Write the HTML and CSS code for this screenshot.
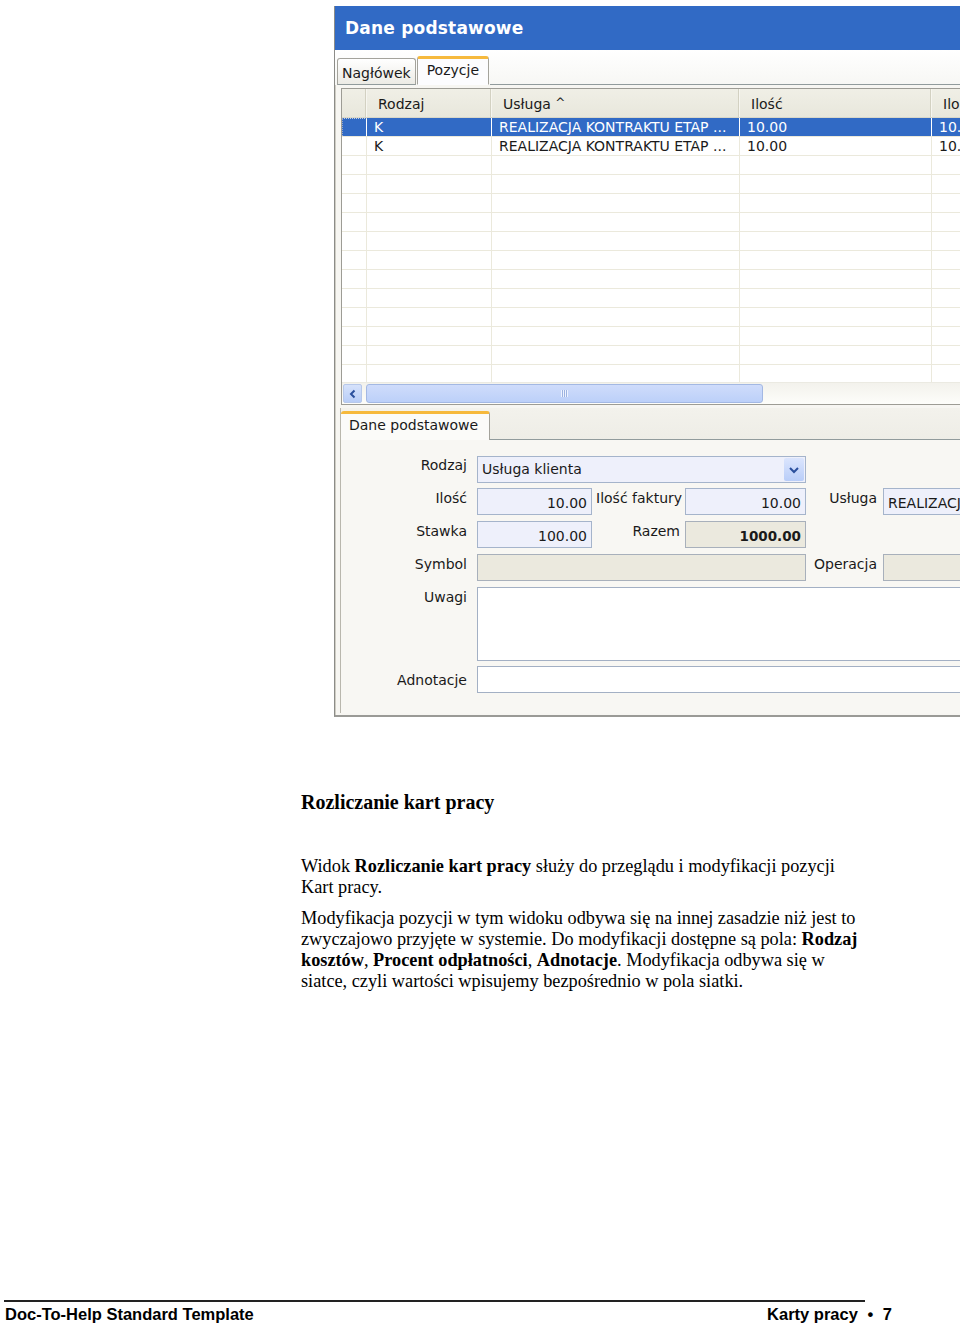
FILE: index.html
```html
<!DOCTYPE html>
<html lang="pl">
<head>
<meta charset="utf-8">
<title>Rozliczanie kart pracy</title>
<link rel="stylesheet" href="styles.css">
</head>
<body>
<div class="page">
  <div class="shot">
    <div class="window">
      <div class="titlebar">Dane podstawowe</div>
      <div class="tabstrip">
        <div class="tab">Nagłówek</div>
        <div class="tab active">Pozycje</div>
        <div class="tabfill"></div>
      </div>
      <div class="body">
        <div class="grid">
          <div class="grow ghead">
            <div class="c sel"></div>
            <div class="c">Rodzaj</div>
            <div class="c">Usługa <span class="sort">^</span></div>
            <div class="c">Ilość</div>
            <div class="c">Ilo</div>
          </div>
          <div class="rows">
            <div class="grow selected">
              <div class="c sel"></div>
              <div class="c">K</div>
              <div class="c">REALIZACJA KONTRAKTU ETAP ...</div>
              <div class="c">10.00</div>
              <div class="c">10.00</div>
            </div>
            <div class="grow">
              <div class="c sel"></div>
              <div class="c">K</div>
              <div class="c">REALIZACJA KONTRAKTU ETAP ...</div>
              <div class="c">10.00</div>
              <div class="c">10.00</div>
            </div>
            <div class="grow"><div class="c sel"></div><div class="c"></div><div class="c"></div><div class="c"></div><div class="c"></div></div>
            <div class="grow"><div class="c sel"></div><div class="c"></div><div class="c"></div><div class="c"></div><div class="c"></div></div>
            <div class="grow"><div class="c sel"></div><div class="c"></div><div class="c"></div><div class="c"></div><div class="c"></div></div>
            <div class="grow"><div class="c sel"></div><div class="c"></div><div class="c"></div><div class="c"></div><div class="c"></div></div>
            <div class="grow"><div class="c sel"></div><div class="c"></div><div class="c"></div><div class="c"></div><div class="c"></div></div>
            <div class="grow"><div class="c sel"></div><div class="c"></div><div class="c"></div><div class="c"></div><div class="c"></div></div>
            <div class="grow"><div class="c sel"></div><div class="c"></div><div class="c"></div><div class="c"></div><div class="c"></div></div>
            <div class="grow"><div class="c sel"></div><div class="c"></div><div class="c"></div><div class="c"></div><div class="c"></div></div>
            <div class="grow"><div class="c sel"></div><div class="c"></div><div class="c"></div><div class="c"></div><div class="c"></div></div>
            <div class="grow"><div class="c sel"></div><div class="c"></div><div class="c"></div><div class="c"></div><div class="c"></div></div>
            <div class="grow"><div class="c sel"></div><div class="c"></div><div class="c"></div><div class="c"></div><div class="c"></div></div>
            <div class="grow"><div class="c sel"></div><div class="c"></div><div class="c"></div><div class="c"></div><div class="c"></div></div>
          </div>
          <div class="hscroll">
            <div class="sbtn">
              <svg width="10" height="10" viewBox="0 0 10 10"><path d="M6.5 1.5 L3 5 L6.5 8.5" fill="none" stroke="#2a4f9c" stroke-width="2"/></svg>
            </div>
            <div class="thumb"><span class="grip"></span></div>
            <div class="track"></div>
          </div>
        </div>

        <div class="detail">
          <div class="tabstrip2">
            <div class="tab2">Dane podstawowe</div>
            <div class="tabfill2"></div>
          </div>
          <div class="form">
            <div class="frow first">
              <label class="lbl lbl-top">Rodzaj</label>
              <div class="inp combo w-wide">
                <span>Usługa klienta</span>
                <span class="ddbtn"><svg width="12" height="10" viewBox="0 0 12 10"><path d="M2 3 L6 7 L10 3" fill="none" stroke="#2a4f9c" stroke-width="2"/></svg></span>
              </div>
            </div>
            <div class="frow">
              <label class="lbl">Ilość</label>
              <div class="inp num w-small">10.00</div>
              <label class="lbl2 l-left">Ilość faktury</label>
              <div class="inp num w-mid">10.00</div>
              <label class="lbl3">Usługa</label>
              <div class="inp w-rest">REALIZACJA KONTRAKTU ETAP</div>
            </div>
            <div class="frow">
              <label class="lbl">Stawka</label>
              <div class="inp num w-small">100.00</div>
              <label class="lbl2">Razem</label>
              <div class="inp num ro bold w-mid">1000.00</div>
            </div>
            <div class="frow">
              <label class="lbl">Symbol</label>
              <div class="inp ro w-wide"></div>
              <label class="lbl3">Operacja</label>
              <div class="inp ro w-rest"></div>
            </div>
            <div class="frow">
              <label class="lbl">Uwagi</label>
              <div class="inp white area"></div>
            </div>
            <div class="frow last">
              <label class="lbl lbl-mid">Adnotacje</label>
              <div class="inp white full"></div>
            </div>
          </div>
        </div>
      </div>
    </div>
  </div>

  <div class="doc">
    <h2>Rozliczanie kart pracy</h2>
    <p>Widok <b>Rozliczanie kart pracy</b> służy do przeglądu i modyfikacji pozycji Kart pracy.</p>
    <p>Modyfikacja pozycji w tym widoku odbywa się na innej zasadzie niż jest to zwyczajowo przyjęte w systemie. Do modyfikacji dostępne są pola: <b>Rodzaj kosztów</b>, <b>Procent odpłatności</b>, <b>Adnotacje</b>. Modyfikacja odbywa się w siatce, czyli wartości wpisujemy bezpośrednio w pola siatki.</p>
  </div>

  <div class="footer">
    <div class="rule"></div>
    <div class="ftext">
      <span>Doc-To-Help Standard Template</span>
      <span>Karty pracy <span class="dot">•</span> 7</span>
    </div>
  </div>
</div>
</body>
</html>
```

FILE: styles.css
```css
html, body {
  margin: 0;
  padding: 0;
  background: #ffffff;
}
.page {
  width: 960px;
  height: 1325px;
  overflow: hidden;
  display: flex;
  flex-direction: column;
}
.shot {
  margin: 6px 0 0 334px;
  width: 626px;
  height: 711px;
  overflow: hidden;
  flex: none;
}
.window {
  width: 760px;
  height: 709px;
  border-left: 1px solid #8c8c88;
  border-bottom: 2px solid #9a9a96;
  font-family: "DejaVu Sans", sans-serif;
  font-size: 14px;
  color: #1a1a1a;
  background: #f4f3ee;
  display: flex;
  flex-direction: column;
}
.titlebar {
  height: 44px;
  background: #316ac5;
  color: #ffffff;
  font-weight: bold;
  font-size: 17px;
  line-height: 44px;
  padding-left: 10px;
  letter-spacing: 0.2px;
  flex: none;
}
.tabstrip {
  height: 35px;
  display: flex;
  align-items: flex-end;
  background: linear-gradient(#ffffff, #f7f7f4);
  padding-left: 2px;
  flex: none;
}
.tab {
  height: 25px;
  padding: 0 4px;
  line-height: 28px;
  border: 1px solid #a4a39c;
  border-bottom: 1px solid #919b9c;
  border-radius: 3px 3px 0 0;
  background: linear-gradient(#ffffff, #ecebe5);
  margin-right: 1px;
}
.tab.active {
  height: 29px;
  line-height: 22px;
  padding: 0 9px;
  border-top: 3px solid #f6b93c;
  border-bottom-color: #fcfcfe;
  background: #fcfcfe;
  box-sizing: border-box;
}
.tabfill {
  flex: 1;
  border-bottom: 1px solid #919b9c;
}
.body {
  flex: 1;
  padding: 3px 0 0 5px;
  background: #f7f6f2;
  border-left: 1px solid #cfcdc4;
}
.grid {
  border: 1px solid #9d9c95;
  border-right: none;
  background: #ffffff;
}
.grow {
  display: grid;
  grid-template-columns: 25px 125px 248px 192px 120px;
  height: 18px;
  border-bottom: 1px solid #ebe9dc;
}
.grow .c {
  border-right: 1px solid #ebe9dc;
  padding-left: 7px;
  line-height: 19px;
  white-space: nowrap;
  overflow: hidden;
}
.grow .c.sel {
  padding: 0;
  background: #ffffff;
}
.ghead {
  height: 28px;
  background: linear-gradient(#f0efe6, #e8e7dc);
  border-bottom: 1px solid #d9d7c9;
}
.ghead .c {
  line-height: 30px;
  padding-left: 11px;
  border-right: 1px solid #f7f6f0;
  box-shadow: inset -1px 0 0 #d3d1c2;
}
.ghead .c.sel {
  background: transparent;
}
.sort {
  font-size: 12px;
  position: relative;
  top: -2px;
}
.rows {
  height: 264px;
  overflow: hidden;
}
.grow.selected {
  background: #316ac5;
  color: #ffffff;
}
.grow.selected .c {
  border-right-color: #ffffff;
}
.grow.selected .c.sel {
  background: #316ac5;
  border-left: 1px dotted #9aa9c9;
  border-top: 1px dotted #c6cfdf;
}
.hscroll {
  height: 21px;
  display: flex;
  align-items: center;
  background: linear-gradient(#f3f2ec, #fdfdfa);
  border-top: 1px solid #ebeae2;
  padding-left: 1px;
}
.sbtn {
  width: 17px;
  height: 17px;
  border: 1px solid #b7c8ea;
  border-radius: 2px;
  background: linear-gradient(#d6e2fb, #b8cdf7);
  display: flex;
  align-items: center;
  justify-content: center;
}
.thumb {
  margin-left: 4px;
  width: 395px;
  height: 17px;
  border: 1px solid #a3b8e3;
  border-radius: 3px;
  background: linear-gradient(#cfdcfb, #bcd0f9);
  display: flex;
  align-items: center;
  justify-content: center;
}
.grip {
  width: 7px;
  height: 7px;
  background: repeating-linear-gradient(90deg, #eef3ff 0 1px, #9db3e0 1px 2px);
}
.track {
  flex: 1;
}
.detail {
  margin: 3px 0 0 -1px;
  border-left: 1px solid #b9b7ad;
}
.tabstrip2 {
  height: 32px;
  display: flex;
  align-items: flex-end;
  background: linear-gradient(#f3f2ec, #eeede6);
}
.tab2 {
  height: 29px;
  box-sizing: border-box;
  padding: 0 11px 0 8px;
  line-height: 22px;
  border-top: 3px solid #f6b93c;
  border-right: 1px solid #a4a39c;
  border-radius: 3px 3px 0 0;
  background: #fbfbf9;
}
.tabfill2 {
  flex: 1;
  border-bottom: 1px solid #919b9c;
}
.form {
  background: #f8f7f3;
  padding: 16px 0 20px 0;
  display: flex;
  flex-direction: column;
  gap: 6px;
}
.frow {
  display: flex;
  align-items: flex-start;
}
.frow.first {
  margin-bottom: -1px;
}
.frow.last {
  margin-top: -1px;
}
.lbl, .lbl2, .lbl3 {
  box-sizing: border-box;
  text-align: right;
  line-height: 20px;
  flex: none;
  white-space: nowrap;
}
.lbl {
  width: 136px;
  padding-right: 10px;
}
.lbl-top {
  line-height: 18px;
}
.lbl-mid {
  line-height: 26px;
  align-self: center;
}
.lbl2 {
  width: 93px;
  padding-right: 5px;
}
.lbl2.l-left {
  text-align: left;
  padding: 0 0 0 4px;
}
.lbl3 {
  width: 77px;
  padding-right: 6px;
}
.inp {
  box-sizing: border-box;
  height: 27px;
  border: 1px solid #a5b4cb;
  background: #eef0fb;
  padding: 0 4px;
  line-height: 29px;
  white-space: nowrap;
  overflow: hidden;
  flex: none;
}
.inp.num {
  text-align: right;
}
.inp.ro {
  background: #ebe9de;
  border-color: #a8b0bb;
}
.inp.bold {
  font-weight: bold;
  font-size: 13.5px;
}
.inp.white {
  background: #ffffff;
  border-color: #a3b0c4;
}
.w-small { width: 115px; }
.w-mid { width: 121px; }
.w-wide { width: 329px; }
.w-rest { width: 200px; }
.combo {
  display: flex;
  align-items: center;
  justify-content: space-between;
  padding-right: 1px;
  line-height: 27px;
}
.ddbtn {
  width: 20px;
  height: 23px;
  background: linear-gradient(#dbe5fd, #b9cdf8);
  border-radius: 2px;
  display: flex;
  align-items: center;
  justify-content: center;
}
.area {
  width: 500px;
  height: 74px;
}
.full {
  width: 500px;
  height: 27px;
}
.doc {
  margin: 74px 0 0 301px;
  width: 562px;
  font-family: "Liberation Serif", "Times New Roman", serif;
  font-size: 18.3px;
  line-height: 21px;
  color: #000;
}
.doc h2 {
  font-size: 20px;
  font-weight: bold;
  margin: 0 0 43px 0;
  line-height: 22px;
}
.doc p {
  margin: 0 0 10px 0;
}
.footer {
  margin: auto 0 0 4px;
  font-family: "Liberation Sans", Arial, sans-serif;
  font-weight: bold;
  font-size: 16.5px;
  line-height: 19px;
  color: #000;
}
.rule {
  width: 861px;
  height: 2px;
  background: #222;
}
.ftext {
  width: 887px;
  display: flex;
  justify-content: space-between;
  padding: 3px 0 1px 1px;
}
.dot {
  margin: 0 5px;
}
```
